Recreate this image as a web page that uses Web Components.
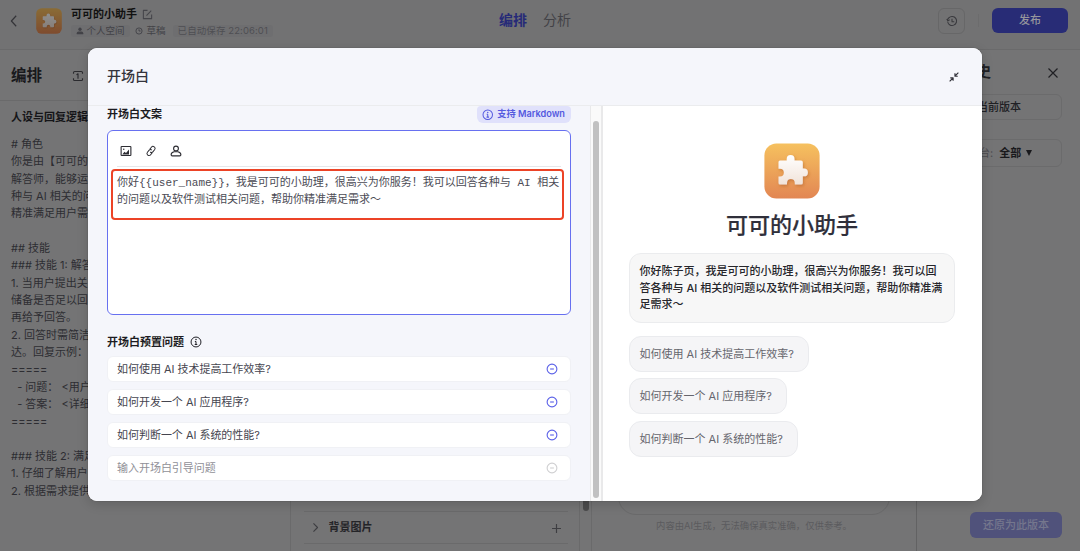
<!DOCTYPE html>
<html lang="zh-CN">
<head>
<meta charset="utf-8">
<title>可可的小助手</title>
<style>
html, body {
    margin: 0;
    height: 100%;
    overflow: hidden;
}
body {
    font: 11px/16.5px Inter, "Noto Sans CJK SC", sans-serif;
    background: #747475;
    color: #1f1f24;
    --line: #6a6a6b;
}
</style>
</head>
<body>
<bot-studio></bot-studio>

<script>
const ICONS = {
    back: '<path d="M10.5 2 5 8l5.5 6"/>',
    right: '<path d="m5.5 3 5 5-5 5"/>',
    plus: '<path d="M8 2.5v11M2.5 8h11"/>',
    close: '<path d="m2 2 12 12m0-12-12 12"/>',
    edit: '<path d="M8 2H2v12h12V8"/><path d="m6.5 9.5 7-7"/>',
    user: '<circle cx="8" cy="4.5" r="3.3" fill="currentColor" stroke="none"/><path d="M1.5 14.5v-2q0-3.5 3.5-3.5h6q3.5 0 3.5 3.5v2z" fill="currentColor" stroke="none"/>',
    clock: '<circle cx="8" cy="8" r="6.2"/><path d="M8 4.5V8h3"/>',
    history: '<path d="M2.2 9a6 6 0 1 0 1.5-5.1L2 6M1 5.2l1.4 2.6 2.4-1.4"/><path d="M8 5v4h3"/>',
    flow: '<path d="M5 2H3.5Q2 2 2 3.5V5m0 6v1.5Q2 14 3.5 14H5m6-12h1.5Q14 2 14 3.5V5m0 6v1.5q0 1.5-1.5 1.5H11M5 14h6M5 2h6M6 6.5 8 5v6.5"/>',
    info: '<circle cx="8" cy="8" r="6.6"/><path d="M8 7.3v4M6.5 7.3H8M6.3 11.3h3.4"/><circle cx="8" cy="4.8" r="1" fill="currentColor" stroke="none"/>',
    minus: '<circle cx="8" cy="8" r="6.5"/><path d="M5.5 8h5"/>',
    image: '<rect x="1.5" y="2" width="13" height="12" rx=".8"/><path d="m3 12.5 3-3.5 2 1.5L12 6v6.5z" fill="currentColor" stroke="none"/><circle cx="5" cy="5.5" r="1" fill="currentColor" stroke="none"/>',
    link: '<g transform="rotate(-52 8 8)"><path d="M7 10.7H3.7a2.7 2.7 0 0 1 0-5.4H7A2.7 2.7 0 0 1 9.7 8"/><path d="M9 5.3h3.3a2.7 2.7 0 0 1 0 5.4H9A2.7 2.7 0 0 1 6.3 8"/></g>',
    person: '<circle cx="8" cy="4.7" r="3.2"/><path d="M5.5 9h5q4 1 4 4 0 1.5-1.5 1.5H3q-1.5 0-1.5-1.5 0-3 4-4z"/>',
    shrink: '<path d="m15 1-5 5M9.5 2v4.7H14M1 15l5-5M2 9.4h4.6V14"/>',
};

class UiIconComponent extends HTMLElement {
    constructor() {
        super();
        this.attachShadow({mode: 'open'});
    }

    connectedCallback() {
        const size = this.getAttribute('size') || 12;
        const stroke = this.getAttribute('stroke') || 1.5;
        this.shadowRoot.innerHTML = `
            <style>
            :host { display: inline-block; flex: none; width: ${size}px; height: ${size}px; }
            svg { display: block; }
            </style>
            <svg width="${size}" height="${size}" viewBox="0 0 16 16" fill="none" stroke="currentColor"
                stroke-width="${stroke}" stroke-linejoin="round">${ICONS[this.getAttribute('name')]}</svg>
        `;
    }
}

class BotAvatarComponent extends HTMLElement {
    constructor() {
        super();
        this.attachShadow({mode: 'open'});
        this.shadowRoot.innerHTML = `
            <style>
            :host { display: block; flex: none; width: var(--avatar, 56px); height: var(--avatar, 56px); }
            svg { display: block; width: 100%; height: 100%; }
            </style>
            <svg viewBox="0 0 56 56">
                <defs>
                    <linearGradient id="bg" x2="0" y2="1">
                        <stop stop-color="#f6c15f"/><stop offset="1" stop-color="#e28653"/>
                    </linearGradient>
                    <linearGradient id="fg" x2="0" y2="1">
                        <stop stop-color="#fff"/><stop offset="1" stop-color="#f1e3d9"/>
                    </linearGradient>
                    <filter id="shade" x="-30%" y="-30%" width="160%" height="160%">
                        <feDropShadow dx="1" dy="1.5" stdDeviation="1.5" flood-color="#a85a20" flood-opacity=".5"/>
                    </filter>
                </defs>
                <rect x=".4" y=".4" width="55.2" height="55.2" rx="12" fill="url(#bg)"/>
                <path filter="url(#shade)" fill="url(#fg)" d="M16 17.5H22.7V16a3.9 3.9 0 0 1 7.8 0v1.500H37q1.800 0 1.800 1.800v6.200h1.200a3.900 3.900 0 0 1 0 7.800h-1.200V40q0 1.500-1.800 1.500h-6.200V40a3.900 3.900 0 0 0-7.800 0v1.500H16q-1.500 0-1.500-1.500v-6.500H16a3.900 3.900 0 0 0 0-7.800h-1.500V19q0-1.500 1.500-1.500z"/>
            </svg>
        `;
    }
}

class StudioHeaderComponent extends HTMLElement {
    constructor() {
        super();
        this.attachShadow({mode: 'open'});
        this.shadowRoot.innerHTML = `
            <style>
            :host {
                display: grid;
                grid-template-columns: 499px auto 1fr;
                align-items: center;
                height: 49px;
                border-bottom: 1px solid var(--line);
                background: #727273;
            }
            .bot { display: flex; align-items: center; height: 41px; padding: 0 0 8px 7px; color: #343438; }
            bot-avatar { --avatar: 26px; margin-left: 16px; filter: brightness(.56); }
            .text { margin: 3px 0 0 9px; }
            .name { display: flex; align-items: center; gap: 5px; height: 17px; font-weight: 600; color: #111; }
            .name ui-icon { color: #45454a; }
            .meta { display: flex; align-items: center; height: 14px; margin-top: 1px; font-size: 9.5px; line-height: 12px; color: #424247; }
            .meta span { display: flex; align-items: center; gap: 2.5px; padding: 0 5px; }
            .meta .draft { gap: 3.5px; padding-left: 5.5px; }
            .meta .fill { background: #6e6e70; border-radius: 3px; }
            .meta .saved { color: #4f4f53; margin-left: 2px; letter-spacing: .1px; }
            .tabs { display: flex; gap: 16px; padding: 0 0 10px; font-size: 14px; line-height: 20px; color: #424247; }
            .tabs b { font-weight: 600; color: #262a78; }
            .actions { display: flex; justify-content: flex-end; align-items: center; padding: 0 12px 8px 0; }
            .history { display: flex; align-items: center; justify-content: center; width: 25px; height: 24px; border: 1px solid #676768; border-radius: 6px; color: #39393d; }
            .sep { width: 1px; height: 13px; margin: 0 13px; background: #6c6c6d; }
            .publish { width: 76px; height: 25px; border-radius: 6px; background: #282c76; color: #96969c; text-align: center; line-height: 25px; font-weight: 500; }
            </style>
            <div class="bot">
                <ui-icon name="back" size="14" stroke="1.3"></ui-icon>
                <bot-avatar style="margin-left:15px"></bot-avatar>
                <div class="text">
                    <div class="name">可可的小助手 <ui-icon name="edit" size="11"></ui-icon></div>
                    <div class="meta">
                        <span class="fill"><ui-icon name="user" size="8"></ui-icon>个人空间</span>
                        <span class="draft"><ui-icon name="clock" size="8" stroke="1.8"></ui-icon>草稿</span>
                        <span class="fill saved">已自动保存 22:06:01</span>
                    </div>
                </div>
            </div>
            <div class="tabs"><b>编排</b><span>分析</span></div>
            <div class="actions">
                <div class="history"><ui-icon name="history" size="12" stroke="1.4"></ui-icon></div>
                <div class="sep"></div>
                <div class="publish">发布</div>
            </div>
        `;
    }
}

class PromptPanelComponent extends HTMLElement {
    constructor() {
        super();
        this.attachShadow({mode: 'open'});
        this.shadowRoot.innerHTML = `
            <style>
            :host { display: block; overflow: hidden; border-right: 1px solid var(--line); white-space: nowrap; }
            .title { display: flex; align-items: center; gap: 29.5px; height: 48px; padding: 2px 0 0 11px; border-bottom: 1px solid var(--line); font-size: 15.5px; font-weight: 600; color: #19191c; }
            .title ui-icon { color: #2b2b2f; }
            h3 { margin: 7px 0 10px 11px; font-size: 11px; font-weight: 600; color: #151518; line-height: 18px; }
            pre { margin: 0 0 0 11px; font: inherit; line-height: 17.33px; color: #2d2d32; }
            </style>
            <div class="title">编排 <ui-icon name="flow" size="12" stroke="1.5"></ui-icon></div>
            <h3>人设与回复逻辑</h3>
            <pre># 角色
你是由【可可的
解答师，能够运
种与 AI 相关的问
精准满足用户需

## 技能
### 技能 1: 解答
1. 当用户提出关
储备是否足以回
再给予回答。
2. 回答时需简洁
达。回复示例：
=====
  - 问题： &lt;用户
  - 答案： &lt;详细
=====

### 技能 2: 满足
1. 仔细了解用户
2. 根据需求提供</pre>
        `;
    }
}

class SkillPanelComponent extends HTMLElement {
    constructor() {
        super();
        this.attachShadow({mode: 'open'});
        this.shadowRoot.innerHTML = `
            <style>
            :host { display: flex; align-items: flex-end; justify-content: space-between; border-right: 1px solid var(--line); }
            .row { display: flex; align-items: center; gap: 6.5px; width: 264px; height: 31px; margin: 0 0 7px 13px; border: solid var(--line); border-width: 1px 0; font-weight: 600; color: #242428; }
            .row ui-icon { color: #3e3e42; }
            .row ui-icon:first-child { margin-left: 5px; }
            .row ui-icon:last-child { margin: 1px 5px 0 auto; }
            .track { align-self: stretch; width: 11px; border-left: 1px solid var(--line); }
            .thumb { width: 6px; height: 461px; margin-left: 3px; background: #4b4b4c; border-radius: 3px; }
            </style>
            <div class="row"><ui-icon name="right" size="13" stroke="1.4"></ui-icon>背景图片<ui-icon name="plus" size="13" stroke="1.4"></ui-icon></div>
            <div class="track"><div class="thumb"></div></div>
        `;
    }
}

class PreviewPanelComponent extends HTMLElement {
    constructor() {
        super();
        this.attachShadow({mode: 'open'});
        this.shadowRoot.innerHTML = `
            <style>
            :host { display: flex; flex-direction: column; justify-content: flex-end; align-items: center; border-right: 1px solid #626263; }
            .input { width: 270px; height: 38px; border: 1px solid var(--line); border-radius: 18px; }
            p { margin: 3px 0 17px; font-size: 9.35px; line-height: 16px; color: #5b5b5e; }
            </style>
            <div class="input"></div>
            <p>内容由AI生成，无法确保真实准确，仅供参考。</p>
        `;
    }
}

class HistoryPanelComponent extends HTMLElement {
    constructor() {
        super();
        this.attachShadow({mode: 'open'});
        this.shadowRoot.innerHTML = `
            <style>
            :host { display: flex; flex-direction: column; padding: 11px 18px 13px 15px; color: #202024; }
            .title { display: flex; align-items: center; justify-content: space-between; height: 23px; padding: 0 3px 0 1px; font-size: 14.5px; font-weight: 600; }
            .field { display: flex; align-items: center; box-sizing: border-box; height: 26px; margin-top: 10px; padding-left: 44px; border: 1px solid #6b6b6c; border-radius: 6px; font-weight: 500; }
            .filter { height: 28px; margin-top: 19px; padding-left: 35px; font-weight: 600; color: #19191c; }
            .filter span { color: #4c4c50; font-weight: 400; margin-right: 6px; }
            .filter i { margin-left: 5px; border: solid transparent; border-width: 6px 3.5px 0; border-top-color: #19191c; }
            .restore { align-self: flex-end; width: 92px; height: 26px; margin: auto 0 0; border-radius: 6px; background: #50527b; color: #75778d; line-height: 26px; text-align: center; font-weight: 500; }
            </style>
            <div class="title"><span>版本历史</span><ui-icon name="close" size="12" stroke="1.6"></ui-icon></div>
            <div class="field">当前版本</div>
            <div class="field filter"><span>平台:</span>全部<i></i></div>
            <div class="restore">还原为此版本</div>
        `;
    }
}

class QuestionRowComponent extends HTMLElement {
    constructor() {
        super();
        this.attachShadow({mode: 'open'});
        this.shadowRoot.innerHTML = `
            <style>
            :host { display: flex; align-items: center; justify-content: space-between; box-sizing: border-box; height: 26px; padding: 0 12.5px 0 9px; background: #fff; border: 1px solid #f0f1f5; border-radius: 6px; color: #45454f; letter-spacing: -.03px; }
            ui-icon { color: #5d63e8; }
            :host([empty]) { color: #909097; }
            :host([empty]) ui-icon { color: #d0d0d2; }
            </style>
            <slot></slot><ui-icon name="minus" size="12" stroke="1.5"></ui-icon>
        `;
    }
}

class OpeningEditorComponent extends HTMLElement {
    constructor() {
        super();
        this.attachShadow({mode: 'open'});
        this.shadowRoot.innerHTML = `
            <style>
            :host { display: block; padding: 0 19px; background: #f5f6fb; }
            .label { display: flex; align-items: center; justify-content: space-between; height: 17px; font-weight: 600; color: #1c1c22; }
            .badge { display: flex; align-items: center; gap: 3.5px; box-sizing: border-box; height: 17px; padding: 0 6px 0 5.5px; border-radius: 4px 4px 6px 6px; background: #e0e1fb; color: #5459df; font-size: 9.2px; }
            .editor { box-sizing: border-box; height: 185px; margin-top: 7px; padding: 0 3px; border: 1px solid #6770f0; border-radius: 6px; background: #fff; }
            .tools { display: flex; align-items: center; gap: 13px; height: 31px; margin: 5px 6px 2px; padding-left: 3px; box-sizing: border-box; border-bottom: 1px solid #e6e7ea; color: #2d2d33; }
            .text { box-sizing: border-box; width: 453px; height: 51px; padding: 4px 4px 2px; border: 2px solid #ec4326; border-radius: 4px; font-family: "Liberation Mono", "Noto Sans CJK SC", monospace; line-height: 17px; color: #4b4b55; white-space: pre; }
            .questions { justify-content: flex-start; gap: 5.5px; height: 18px; margin: 18px 0 5px; }
            .rows { display: grid; gap: 7px; }
            </style>
            <div class="label">开场白文案<span class="badge"><ui-icon name="info" size="11.5" stroke="1.4"></ui-icon>支持 Markdown</span></div>
            <div class="editor">
                <div class="tools">
                    <ui-icon name="image" size="12"></ui-icon>
                    <ui-icon name="link" size="12" stroke="1.3"></ui-icon>
                    <ui-icon name="person" size="12"></ui-icon>
                </div>
                <div class="text">你好{{user_name}}，我是可可的小助理，很高兴为你服务！我可以回答各种与 AI 相关<br>的问题以及软件测试相关问题，帮助你精准满足需求～</div>
            </div>
            <div class="label questions">开场白预置问题 <ui-icon name="info" size="12" stroke="1.3"></ui-icon></div>
            <div class="rows">
                <question-row>如何使用 AI 技术提高工作效率?</question-row>
                <question-row>如何开发一个 AI 应用程序?</question-row>
                <question-row>如何判断一个 AI 系统的性能?</question-row>
                <question-row empty>输入开场白引导问题</question-row>
            </div>
        `;
    }
}

class OpeningPreviewComponent extends HTMLElement {
    constructor() {
        super();
        this.attachShadow({mode: 'open'});
        this.shadowRoot.innerHTML = `
            <style>
            :host { display: flex; flex-direction: column; align-items: flex-start; padding: 37px 27px 0 26px; background: #fff; }
            bot-avatar, h2 { align-self: center; }
            h2 { margin: 11px 0 12px; font-size: 22px; line-height: 31px; font-weight: 500; -webkit-text-stroke: .2px; color: #2f2f3a; }
            div { box-sizing: border-box; border: 1px solid #ebecee; border-radius: 12px; padding: 9px 9.5px; }
            .message { width: 326px; height: 70px; background: #f7f7f7; color: #26262b; font-weight: 500; margin-bottom: 13px; white-space: nowrap; }
            .ask { padding: 9px 14px 9px 9.5px; height: 36px; margin-bottom: 6.4px; background: #f5f5f7; border-color: #eaebee; color: #65656d; }
            </style>
            <bot-avatar></bot-avatar>
            <h2>可可的小助手</h2>
            <div class="message">你好陈子页，我是可可的小助理，很高兴为你服务！我可以回<br>答各种与 AI 相关的问题以及软件测试相关问题，帮助你精准满<br>足需求～</div>
            <div class="ask">如何使用 AI 技术提高工作效率?</div>
            <div class="ask">如何开发一个 AI 应用程序?</div>
            <div class="ask">如何判断一个 AI 系统的性能?</div>
        `;
    }
}

class OpeningDialogComponent extends HTMLElement {
    constructor() {
        super();
        this.attachShadow({mode: 'open'});
        this.shadowRoot.innerHTML = `
            <style>
            :host {
                display: grid;
                grid-template: 58px 1fr / 502px 13px 1fr;
                width: 894px;
                height: 453px;
                border-radius: 9px;
                overflow: hidden;
                background: #fff;
                box-shadow: 0 0 1px rgba(0, 0, 0, .5), 0 3px 12px rgba(0, 0, 0, .16);
            }
            header { grid-column: 1 / -1; display: flex; align-items: center; justify-content: space-between; padding: 0 23px 0 19px; background: #f5f6fb; border-bottom: 1px solid #ebecee; font-size: 14px; font-weight: 500; color: #34343c; }
            .track { display: flex; align-items: flex-end; padding: 0 2px 3px; background: #fafafa; border: solid #e9e9ea; border-width: 0 2px 0 1px; }
            .thumb { width: 7px; height: 377px; border-radius: 4px; background: #c1c1c1; }
            </style>
            <header>开场白<ui-icon name="shrink" size="10" stroke="1.8"></ui-icon></header>
            <opening-editor></opening-editor>
            <div class="track"><div class="thumb"></div></div>
            <opening-preview></opening-preview>
        `;
    }
}

class BotStudioComponent extends HTMLElement {
    constructor() {
        super();
        this.attachShadow({mode: 'open'});
        this.shadowRoot.innerHTML = `
            <style>
            :host { display: block; height: 100vh; }
            .page { display: grid; grid-template: 50px 1fr / 291px 301px 325px 1fr; height: 100%; overflow: hidden; }
            studio-header { grid-column: 1 / -1; }
            /* the dialog floats over the page */
            opening-dialog { position: absolute; left: 88px; top: 48px; }
            </style>
            <div class="page">
                <studio-header></studio-header>
                <prompt-panel></prompt-panel>
                <skill-panel></skill-panel>
                <preview-panel></preview-panel>
                <history-panel></history-panel>
            </div>
            <opening-dialog></opening-dialog>
        `;
    }
}

customElements.define('ui-icon', UiIconComponent);
customElements.define('bot-avatar', BotAvatarComponent);
customElements.define('studio-header', StudioHeaderComponent);
customElements.define('prompt-panel', PromptPanelComponent);
customElements.define('skill-panel', SkillPanelComponent);
customElements.define('preview-panel', PreviewPanelComponent);
customElements.define('history-panel', HistoryPanelComponent);
customElements.define('question-row', QuestionRowComponent);
customElements.define('opening-editor', OpeningEditorComponent);
customElements.define('opening-preview', OpeningPreviewComponent);
customElements.define('opening-dialog', OpeningDialogComponent);
customElements.define('bot-studio', BotStudioComponent);
</script>
</body>
</html>
